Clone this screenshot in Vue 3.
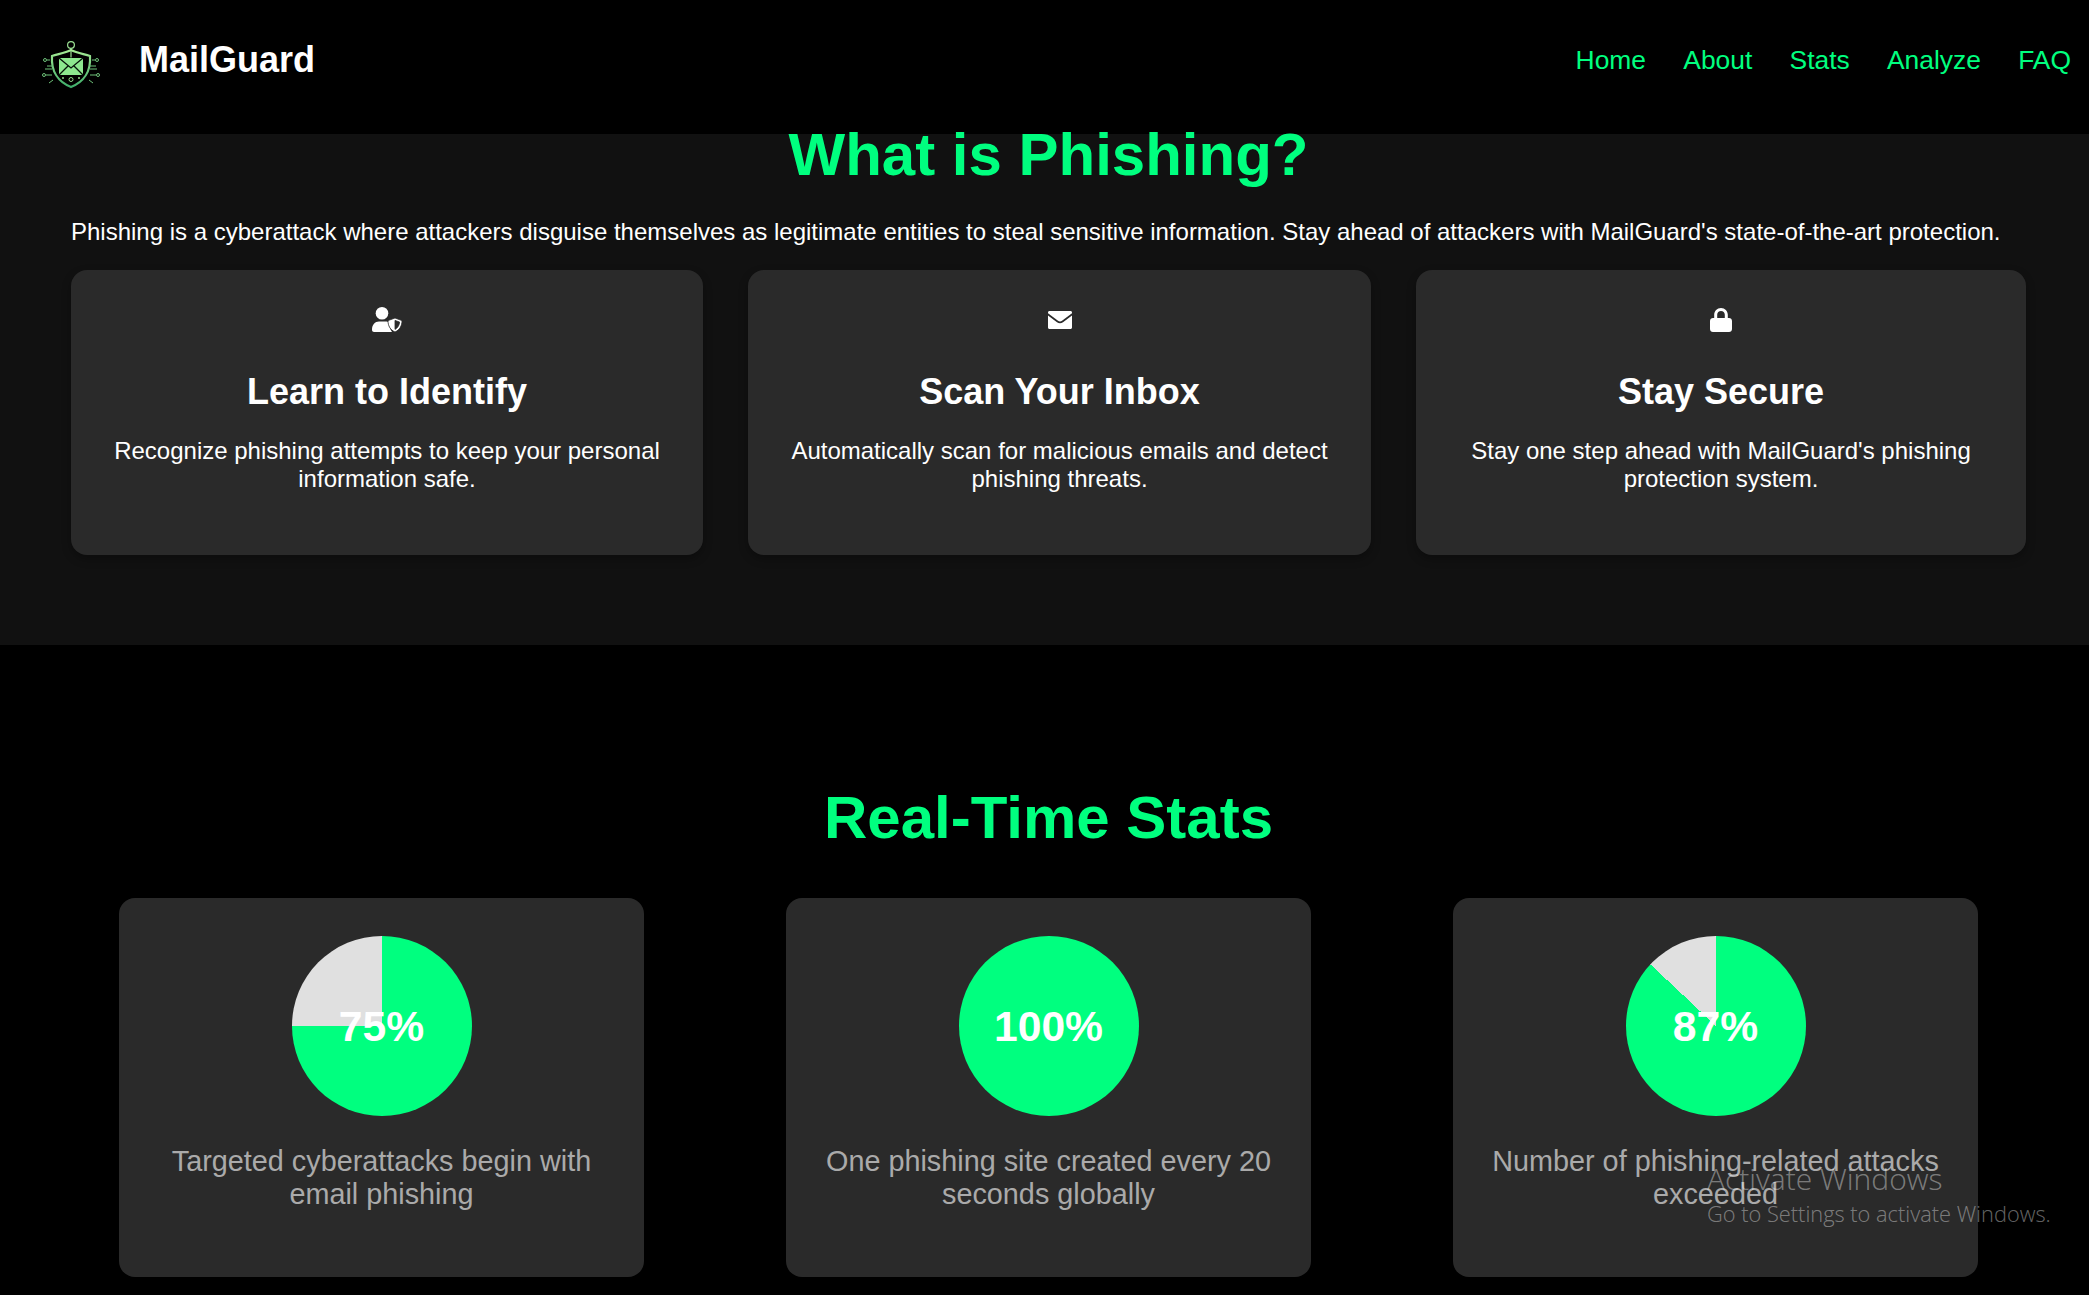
<script setup>
const features = [
  { icon: 'user', title: 'Learn to Identify', text: 'Recognize phishing attempts to keep your personal information safe.' },
  { icon: 'mail', title: 'Scan Your Inbox', text: 'Automatically scan for malicious emails and detect phishing threats.' },
  { icon: 'lock', title: 'Stay Secure', text: "Stay one step ahead with MailGuard's phishing protection system." }
]
const stats = [
  { value: 75, text: 'Targeted cyberattacks begin with email phishing' },
  { value: 100, text: 'One phishing site created every 20 seconds globally' },
  { value: 87, text: 'Number of phishing-related attacks exceeded' }
]
const links = ['Home', 'About', 'Stats', 'Analyze', 'FAQ']
function pie(v) {
  return { background: `conic-gradient(#00ff7f 0 ${v}%, #e0e0e0 0 100%)` }
}
</script>

<template>
  <div class="page">
    <header class="nav">
      <div class="brand">
        <svg class="logo" viewBox="0 0 60 50" fill="none">
          <defs>
            <linearGradient id="lg" x1="0" y1="0" x2="0" y2="1">
              <stop offset="0" stop-color="#a5eb95" />
              <stop offset="1" stop-color="#3fae6a" />
            </linearGradient>
          </defs>
          <circle cx="29" cy="5" r="3.4" stroke="#9adf92" stroke-width="1.2" />
          <path d="M29 8.500v9" stroke="#9adf92" stroke-width="1.2" />
          <path d="M29 10C23 13 16 14 10 16c-1 15 6 26 19 31 13-5 20-16 19-31-6-2-13-3-19-6z" stroke="url(#lg)" stroke-width="2.200" />
          <path d="M17 18h24v17H17z" fill="#8de88f" />
          <path d="M17 18l12 10 12-10M17 35l9-9M41 35l-9-9" stroke="#06140a" stroke-width="1.300" />
          <circle cx="29" cy="39.500" r="2" stroke="#8fd98a" />
          <circle cx="21" cy="38" r="1" fill="#8fd98a" />
          <circle cx="37" cy="38" r="1" fill="#8fd98a" />
          <circle cx="3" cy="20" r="1.500" stroke="#6fc27a" />
          <circle cx="55" cy="20" r="1.500" stroke="#6fc27a" />
          <circle cx="2" cy="35" r="1.500" stroke="#6fc27a" />
          <circle cx="56" cy="35" r="1.500" stroke="#6fc27a" />
          <path d="M5 20h3M5 26h6M3 29h7M4 35h6M50 20h3M47 26h7M48 29h7M48 35h6M11 40l-4 3M47 40l4 3" stroke="#6fc27a" stroke-width="1" />
        </svg>
        <span class="brand-name">MailGuard</span>
      </div>
      <nav class="links">
        <a v-for="l in links" :key="l">{{ l }}</a>
      </nav>
    </header>

    <section class="about">
      <h2 class="about-title">What is Phishing?</h2>
      <p class="about-text">Phishing is a cyberattack where attackers disguise themselves as legitimate entities to steal sensitive information. Stay ahead of attackers with MailGuard's state-of-the-art protection.</p>
      <div class="features">
        <div v-for="f in features" :key="f.title" class="feature">
          <svg v-if="f.icon === 'user'" class="ficon user" viewBox="0 0 30 25" fill="#fff">
            <circle cx="10" cy="6.300" r="6.300" />
            <path d="M0 23c0-5.500 3-8.500 7-8.500h6c2 0 3.500.5 4.500 1.200v2.300c0 2.600 1 4.800 2.500 7H2c-1 0-2-.9-2-2z" />
            <path fill-rule="evenodd" stroke="#2a2a2a" stroke-width=".8" d="M23 11l7 2.600c0 5.200-2.200 9.300-7 11.400-4.800-2.100-7-6.200-7-11.400zm0 2.400v9c2.900-1.600 4.300-4.200 4.600-7.300z" />
          </svg>
          <svg v-else-if="f.icon === 'mail'" class="ficon" viewBox="0 0 24 18" fill="#fff">
            <path d="M1.500 0h21c.9 0 1.500.7 1.500 1.500v.8L14 9.800c-1.200.9-2.800.9-4 0L0 2.300v-.8C0 .7.600 0 1.500 0z" />
            <path d="M0 4.500l9 6.800c1.800 1.300 4.200 1.300 6 0l9-6.800v12c0 .8-.7 1.500-1.500 1.500h-21C.7 18 0 17.300 0 16.500z" />
          </svg>
          <svg v-else class="ficon" viewBox="0 0 24 24" fill="#fff">
            <path fill-rule="evenodd" d="M12 0c-3.900 0-6.800 3-6.800 6.800V10H4c-1.700 0-3 1.300-3 3v8c0 1.700 1.300 3 3 3h16c1.700 0 3-1.300 3-3v-8c0-1.700-1.300-3-3-3h-1.200V6.800C18.800 3 15.900 0 12 0zm0 3c2.200 0 3.800 1.700 3.800 3.800V10H8.200V6.800C8.200 4.700 9.800 3 12 3z" />
          </svg>
          <h3 class="feature-title">{{ f.title }}</h3>
          <p class="feature-text">{{ f.text }}</p>
        </div>
      </div>
    </section>

    <section class="stats">
      <h2 class="stats-title">Real-Time Stats</h2>
      <div class="stat-row">
        <div v-for="s in stats" :key="s.value" class="stat">
          <div class="pie" :style="pie(s.value)">
            <span class="pie-label">{{ s.value }}%</span>
          </div>
          <p class="stat-text">{{ s.text }}</p>
        </div>
      </div>
    </section>

    <div class="activate">
      <div class="activate-big">Activate Windows</div>
      <div class="activate-small">Go to Settings to activate Windows.</div>
    </div>
  </div>
</template>

<style>
html, body { margin: 0; background: #000; }
</style>

<style scoped>
.page {
  position: relative;
  width: 2089px;
  height: 1295px;
  overflow: hidden;
  background: #000;
  color: #fff;
  font-family: "Liberation Sans", Arial, sans-serif;
}
.nav {
  height: 134px;
  display: flex;
  align-items: center;
  justify-content: space-between;
  padding: 0 18px 0 42px;
  box-sizing: border-box;
  background: #000;
}
.brand { display: flex; align-items: center; gap: 37px; margin-top: -4px; }
.logo { width: 60px; height: 50px; }
.brand-name { font-size: 36px; font-weight: 700; margin-top: -11px; }
.links { display: flex; gap: 37.300px; margin-top: -14px; }
.links a { color: #00ff7f; font-size: 26.400px; }

.about {
  height: 511px;
  background: #111;
  padding: 0 71px;
  box-sizing: border-box;
}
.about-title {
  margin: 0;
  height: 42px;
  line-height: 42px;
  text-align: center;
  font-size: 60px;
  color: #00ff7f;
  padding-left: 8px;
}
.about-text {
  margin: 42px 0 0;
  font-size: 24px;
  line-height: 28px;
  white-space: nowrap;
}
.features {
  margin-top: 24px;
  display: grid;
  grid-template-columns: 632px 623px 610px;
  gap: 45px;
}
.feature {
  height: 285px;
  box-sizing: border-box;
  padding: 38px 40px 0;
  background: #2a2a2a;
  border-radius: 16px;
  text-align: center;
  box-shadow: 0 4px 10px rgba(0, 0, 0, .3);
}
.ficon { display: block; width: 24px; height: 24px; margin: 0 auto; }
.ficon.user { width: 30px; height: 25px; margin-top: -1px; }
.feature-title { margin: 39px 0 0; font-size: 36px; line-height: 41px; }
.feature-text { margin: 25px 0 0; font-size: 24px; line-height: 28px; }

.stats-title {
  margin: 138px 0 0;
  padding-left: 8px;
  text-align: center;
  font-size: 60px;
  line-height: 70px;
  color: #00ff7f;
}
.stat-row {
  margin-top: 45px;
  display: flex;
  gap: 142px;
  padding-left: 119px;
}
.stat {
  width: 525px;
  height: 379px;
  box-sizing: border-box;
  padding: 38px 30px 0;
  background: #2a2a2a;
  border-radius: 16px;
  text-align: center;
}
.pie {
  width: 180px;
  height: 180px;
  border-radius: 50%;
  margin: 0 auto;
  display: flex;
  align-items: center;
  justify-content: center;
}
.pie-label { font-size: 42.670px; font-weight: 700; color: #fff; }
.stat-text { margin: 29px 0 0; font-size: 28.800px; line-height: 33px; color: #aaa; }

.activate {
  position: absolute;
  left: 1707px;
  top: 1160px;
  color: rgba(255, 255, 255, .4);
  font-family: "Open Sans", sans-serif;
  font-weight: 300;
}
.activate-big { font-size: 30px; line-height: 38px; }
.activate-small { font-size: 21.800px; line-height: 30px; margin-top: 1px; }
</style>
